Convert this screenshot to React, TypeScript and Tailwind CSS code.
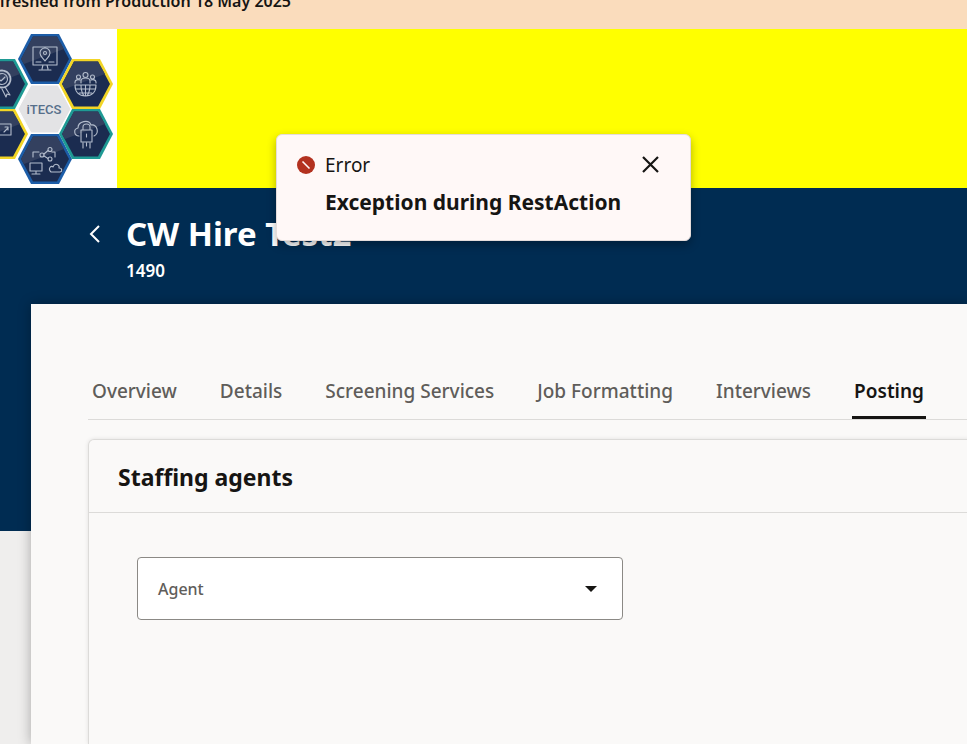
import { useState } from 'react';

const tabs = ['Overview', 'Details', 'Screening Services', 'Job Formatting', 'Interviews', 'Posting'];

function Hexagon({ cx, cy, color }: { cx: number; cy: number; color: string }) {
  const outer = `${cx - 27},${cy} ${cx - 14},${cy - 25} ${cx + 14},${cy - 25} ${cx + 27},${cy} ${cx + 14},${cy + 25} ${cx - 14},${cy + 25}`;
  const inner = `${cx - 24},${cy} ${cx - 12},${cy - 22.5} ${cx + 12},${cy - 22.5} ${cx + 24},${cy} ${cx + 12},${cy + 22.5} ${cx - 12},${cy + 22.5}`;
  const shine = `${cx - 21},${cy + 5} ${cx - 24},${cy} ${cx - 12},${cy - 22.5} ${cx + 12},${cy - 22.5} ${cx + 19},${cy - 10}`;
  return (
    <g>
      <polygon points={outer} fill={color} />
      <polygon points={inner} fill="#1b2c50" />
      <polygon points={shine} fill="#33405f" />
    </g>
  );
}

function Logo() {
  return (
    <svg className="h-[159px] w-[117px] shrink-0 bg-white" viewBox="0 0 117 159" role="img" aria-label="iTECS logo">
      <Hexagon cx={1} cy={55} color="#1f9a94" />
      <Hexagon cx={1} cy={105} color="#f2d526" />
      <Hexagon cx={45} cy={30} color="#1c5da8" />
      <Hexagon cx={45} cy={130} color="#1c5da8" />
      <Hexagon cx={86} cy={55} color="#f2d526" />
      <Hexagon cx={86} cy={105} color="#1f9a94" />
      <polygon points="18,80 31,56 58,56 71,80 58,104 31,104" fill="#e3e3e5" stroke="#fff" strokeWidth="1" />
      <text x="44" y="85" textAnchor="middle" fontFamily="Roboto, sans-serif" fontSize="13" fontWeight="500" fill="#566f8b">
        iTECS
      </text>
      <g fill="none" stroke="#b4bdcd" strokeWidth="1.1" strokeLinecap="round" strokeLinejoin="round">
        <path d="M33 18h24v18H33z M43 36l-1 4M47 36l1 4M39 41h12M45 32c-3-4-5-5-5-8a5 5 0 0 1 10 0c0 3-2 4-5 8z M36 33h5M49 33h5" />
        <circle cx="45" cy="24" r="1.5" />
        <path d="M75 56h21c0 7-4 11-10.500 11S75 63 75 56z M76 60h19M79 64h13M85.500 56v11M81 56c0 5 1 8 3 11M90 56c0 5-1 8-3 11" />
        <circle cx="85.500" cy="46" r="2.500" />
        <circle cx="78.500" cy="48" r="2" />
        <circle cx="92.500" cy="48" r="2" />
        <path d="M81 54v-2c0-4 9-4 9 0v2M75 54v-1c0-2 3-3 5-2M96 54v-1c0-2-3-3-5-2" />
        <path d="M79 107c-5 0-6-7-1-8 0-7 11-9 13-3 6-1 9 8 3 11M81 101h11v12H81zM83 101v-3c0-4 7-4 7 0v3M86.500 105v3M83 114v5M90 114v5M86.500 114v3" />
        <path d="M30 134h12v8H30zM36 142v3M32 145h8M33 128v-5h6M55 128v-5h-3M51 143c-4-4 1-7 2-5 2-5 7-2 6 1 4 0 3 4 1 4z" />
        <circle cx="42" cy="126" r="2" />
        <circle cx="50" cy="120.500" r="2" />
        <circle cx="50" cy="130" r="2" />
        <path d="M44 125l4-3.500M44 127l4 2.500" />
        <circle cx="2" cy="50" r="8.500" strokeWidth="1.800" strokeDasharray="3 1.200" />
        <circle cx="2" cy="50" r="5.500" />
        <path d="M-1 50l2 2 4-4M-1 59l-3 8M5 58l5 8-3-1-1 3-4-8M0 95h11v11H0M4 103l4-4M5 98h3v3" />
      </g>
    </svg>
  );
}

function ErrorToast({ onClose }: { onClose: () => void }) {
  return (
    <div className="pointer-events-none absolute inset-x-0 top-[134px] z-10 flex justify-center">
      <div
        role="alert"
        className="pointer-events-auto flex w-[415px] rounded-md border border-[#e5dcda] bg-[#fff8f7] pt-[15px] pr-6 pb-5 pl-5 shadow-[0_4px_10px_rgba(0,0,0,0.3)]"
      >
        <svg className="mt-1.5 mr-2.5 size-[18px] shrink-0" viewBox="0 0 18 18" aria-hidden="true">
          <circle cx="9" cy="9" r="9" fill="#b3311f" />
          <path d="M5.500 5.500l7 7" stroke="#fff8f7" strokeWidth="1.600" />
        </svg>
        <div className="grow text-[#161513]">
          <p className="text-[19px] leading-[30px]">Error</p>
          <h2 className="mt-1 text-[21px] leading-9 font-bold whitespace-nowrap">Exception during RestAction</h2>
        </div>
        <button type="button" aria-label="Close" onClick={onClose} className="flex h-7 w-8 shrink-0 items-center justify-center">
          <svg className="size-[17px]" viewBox="0 0 17 17" fill="none" stroke="#161513" strokeWidth="2.200" aria-hidden="true">
            <path d="M1 1l15 15M16 1L1 16" />
          </svg>
        </button>
      </div>
    </div>
  );
}

export default function App() {
  const [open, setOpen] = useState(true);
  const [active, setActive] = useState('Posting');
  return (
    <div className="relative flex min-h-screen flex-col overflow-hidden bg-[#efeeed] font-['Noto_Sans',sans-serif]">
      <div className="h-[29px] overflow-hidden bg-[#fadcbc]">
        <p className="-mt-[11px] flex w-[291px] justify-end text-base leading-6 font-semibold whitespace-nowrap text-[#161513]">
          freshed from Production 18 May 2025
        </p>
      </div>
      <div className="flex bg-[#ffff00]">
        <Logo />
      </div>
      <div className="flex grow flex-col bg-[linear-gradient(#002c52_343px,#efeeed_343px)]">
        <header className="flex h-[116px] gap-[25px] pt-[23px] pl-[88px] text-white">
          <button type="button" aria-label="Back" className="mt-[13px] flex h-5 w-[13px] items-center">
            <svg className="h-5 w-[13px]" viewBox="0 0 13 20" fill="none" stroke="currentColor" strokeWidth="2" aria-hidden="true">
              <path d="M11 2L3 10l8 8" />
            </svg>
          </button>
          <div>
            <h1 className="text-[33px] leading-[46px] font-bold">CW Hire Test2</h1>
            <p className="text-[17px] leading-7 font-semibold">1490</p>
          </div>
        </header>
        <main className="ml-[31px] flex grow flex-col bg-[#faf9f8] pt-[56px] pl-[57px] shadow-[0_0_12px_rgba(0,0,0,0.3)]">
          <div role="tablist" className="flex h-[60px] gap-[39px] border-b border-[#dcdbd9] pl-0.5">
            {tabs.map((tab) => (
              <button
                key={tab}
                type="button"
                role="tab"
                aria-selected={tab === active}
                onClick={() => setActive(tab)}
                className={
                  'shrink-0 rounded-t-sm px-0.5 pt-0.5 text-[19px] leading-7 whitespace-nowrap ' +
                  (tab === active
                    ? 'font-semibold text-[#161513] shadow-[inset_0_-3px_0_#161513]'
                    : 'font-medium text-[#5f5d5a]')
                }
              >
                {tab}
              </button>
            ))}
          </div>
          <section className="mt-[19px] -mr-2 grow rounded-tl-md border border-b-0 border-[#dcdbd9] shadow-[0_0_4px_rgba(0,0,0,0.1)]">
            <h2 className="border-b border-[#dcdbd9] px-[29px] pt-[19px] pb-[17px] text-[23px] leading-9 font-bold text-[#161513]">Staffing agents</h2>
            <div className="grid px-12 pt-11">
              <label htmlFor="agent" className="pointer-events-none z-1 col-start-1 row-start-1 self-center justify-self-start pl-[21px] text-base leading-6 font-medium text-[#5f5d5a]">
                Agent
              </label>
              <select
                id="agent"
                defaultValue=""
                className="col-start-1 row-start-1 h-[63px] w-full max-w-[486px] appearance-none rounded border border-[#8b8985] bg-white px-5 text-base"
              >
                <option value="" />
              </select>
              <div className="pointer-events-none col-start-1 row-start-1 flex w-full max-w-[486px] items-center justify-end pr-[26px]">
                <svg className="h-1.5 w-3" viewBox="0 0 12 6" aria-hidden="true">
                  <path d="M0 0h12L6 6z" fill="#161513" />
                </svg>
              </div>
            </div>
          </section>
        </main>
      </div>
      {open && <ErrorToast onClose={() => setOpen(false)} />}
    </div>
  );
}
